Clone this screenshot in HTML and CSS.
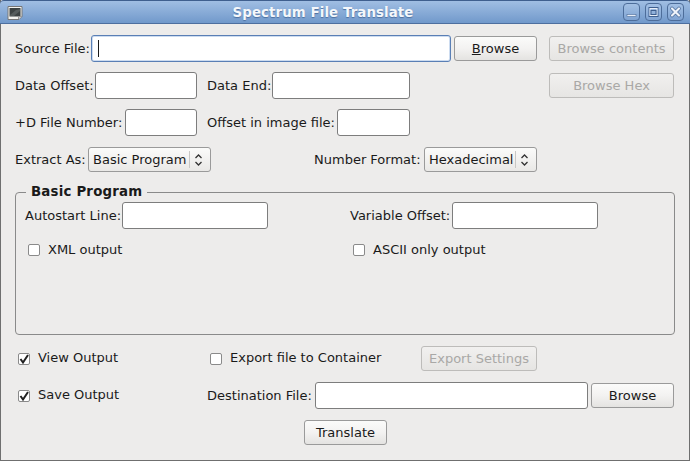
FILE: index.html
```html
<!DOCTYPE html>
<html>
<head>
<meta charset="utf-8">
<title>Spectrum File Translate</title>
<link rel="stylesheet" href="styles.css">
</head>
<body>
<div class="window">
  <div class="titlebar">
    <svg class="app-icon" width="16" height="16" viewBox="0 0 16 16"><path d="M1 1.5h14v10l-3 3H1z" fill="#f2f2ee" stroke="#777"/><rect x="2.5" y="3" width="11" height="8.5" fill="#3c4242"/><path d="M3 10 L9 5 L13 4 V6 L7 11 H3z" fill="#555c5c"/><path d="M11.5 14 V11.5 H15" fill="#ccc" stroke="#999"/></svg>
    <div class="title">Spectrum File Translate</div>
    <div class="wm">
      <span class="wm-btn"><svg width="15" height="16" viewBox="0 0 15 16"><rect x="3" y="10.5" width="9" height="2" fill="#e8eef7" stroke="#4d6d9a" stroke-width=".6"/></svg></span>
      <span class="wm-btn"><svg width="15" height="16" viewBox="0 0 15 16"><rect x="3" y="3.5" width="9" height="9" fill="none" stroke="#3f5f8e" stroke-width="1"/><rect x="4" y="4.5" width="7" height="7" fill="none" stroke="#e8eef7" stroke-width="1"/><rect x="5" y="6.5" width="5" height="4" fill="none" stroke="#3f5f8e" stroke-width="1"/></svg></span>
      <span class="wm-btn"><svg width="15" height="16" viewBox="0 0 15 16"><path d="M4 4.5 L11 11.5 M11 4.5 L4 11.5" stroke="#4d6d9a" stroke-width="3.6" stroke-linecap="round"/><path d="M4 4.5 L11 11.5 M11 4.5 L4 11.5" stroke="#eef3fa" stroke-width="2.2" stroke-linecap="round"/></svg></span>
    </div>
  </div>
  <div class="content">
    <div class="row row-1">
      <div class="field"><label class="l74">Source File:</label><input class="w360 focus" type="text"></div>
      <button class="btn b83 first"><u>B</u>rowse</button>
      <button class="btn b125 ml12" disabled>Browse contents</button>
    </div>
    <div class="row row-2">
      <div class="field cell192"><label class="l78">Data Offset:</label><input class="w102" type="text"></div>
      <div class="field cell342"><label class="l63">Data End:</label><input class="w138" type="text"></div>
      <button class="btn b125" disabled>Browse Hex</button>
    </div>
    <div class="row row-3">
      <div class="field cell192"><label class="l108">+D File Number:</label><input class="w72" type="text"></div>
      <div class="field"><label class="l128">Offset in image file:</label><input class="w73" type="text"></div>
    </div>
    <div class="row row-4">
      <div class="field cell299"><label class="l70">Extract As:</label><div class="combo w123"><span class="combo-text">Basic Program</span><span class="spin"><svg width="9" height="14" viewBox="0 0 9 14"><path d="M1.5 5 L4.5 2 L7.5 5 M1.5 9 L4.5 12 L7.5 9" fill="none" stroke="#333" stroke-width="1.3"/></svg></span></div></div>
      <div class="field"><label class="l107">Number Format:</label><div class="combo w113"><span class="combo-text">Hexadecimal</span><span class="spin"><svg width="9" height="14" viewBox="0 0 9 14"><path d="M1.5 5 L4.5 2 L7.5 5 M1.5 9 L4.5 12 L7.5 9" fill="none" stroke="#333" stroke-width="1.3"/></svg></span></div></div>
    </div>
    <fieldset class="group">
      <legend>Basic Program</legend>
      <div class="row group-fields">
        <div class="field cell325"><label class="l95">Autostart Line:</label><input class="w146" type="text"></div>
        <div class="field"><label class="l100">Variable Offset:</label><input class="w146" type="text"></div>
      </div>
      <div class="row group-checks">
        <div class="check cell325 inset"><span class="box"></span><span>XML output</span></div>
        <div class="check inset"><span class="box"></span><span>ASCII only output</span></div>
      </div>
    </fieldset>
    <div class="row row-view">
      <div class="check cell192 inset"><span class="box"><svg width="12" height="12" viewBox="0 0 12 12"><path d="M2.5 6 L5 9.5 L10 2" fill="none" stroke="#222" stroke-width="2"/></svg></span><span>View Output</span></div>
      <div class="check cell214 inset"><span class="box"></span><span>Export file to Container</span></div>
      <button class="btn b116" disabled>Export Settings</button>
    </div>
    <div class="row row-save">
      <div class="check cell192 inset"><span class="box"><svg width="12" height="12" viewBox="0 0 12 12"><path d="M2.5 6 L5 9.5 L10 2" fill="none" stroke="#222" stroke-width="2"/></svg></span><span>Save Output</span></div>
      <div class="field"><label class="l106">Destination File:</label><input class="w273" type="text"></div>
      <button class="btn b83 first">Browse</button>
    </div>
    <div class="row row-go">
      <button class="btn b83">Translate</button>
    </div>
  </div>
</div>
</body>
</html>
```
FILE: styles.css
```css
* { box-sizing: border-box; }
html, body { margin: 0; padding: 0; }
body { width: 690px; height: 461px; overflow: hidden; font-family: "DejaVu Sans", sans-serif; font-size: 13px; color: #1a1a1a; background: #edeceb; }
.window { width: 690px; height: 461px; background: #edeceb; border-left: 1px solid #6f6f6f; border-right: 1px solid #6f6f6f; border-bottom: 1px solid #6f6f6f; display: flex; flex-direction: column; }
.titlebar { height: 24px; flex: none; margin: 0 -1px; padding-right: 44px; position: relative; display: flex; align-items: center; justify-content: center; border-top: 1px solid #3f5f8e; border-bottom: 1px solid #4d6f9f; border-radius: 4px 4px 0 0; background: linear-gradient(#a0bee3, #7199cb); }
.app-icon { position: absolute; left: 7px; top: 4px; }
.title { font-weight: bold; font-size: 13.33px; color: #f4f7fb; letter-spacing: .1px; text-shadow: 0 1px 1px #4d6f9f; }
.wm { position: absolute; right: 6px; top: 2px; display: flex; gap: 5px; }
.wm-btn { width: 17px; height: 18px; border: 1px solid #4d6d9a; border-radius: 4px; background: linear-gradient(#a3c0e4, #7fa3d2); display: flex; align-items: center; justify-content: center; }
.wm-btn svg { flex: none; }
.content { flex: 1; padding: 0 0 0 14px; display: flex; flex-direction: column; }
.row { display: flex; align-items: center; }
.row-1 { height: 27px; margin-top: 11px; }
.row-2 { height: 27px; margin-top: 10px; }
.row-3 { height: 27px; margin-top: 10px; }
.row-4 { height: 25px; margin-top: 11px; }
.field { display: flex; align-items: center; gap: 2px; }
label { white-space: nowrap; flex: none; }
.l74 { width: 74px; } .l78 { width: 78px; } .l63 { width: 63px; } .l108 { width: 108px; } .l128 { width: 128px; } .l70 { width: 70px; } .l107 { width: 107px; } .l95 { width: 95px; } .l100 { width: 100px; } .l106 { width: 106px; }
input { height: 27px; margin: 0; padding: 0 4px; background: #fff; border: 1px solid #7d7d7d; border-radius: 3px; outline: none; display: block; font: inherit; }
input.focus { border-color: #5a7fb5; box-shadow: inset 0 0 0 1px #cddcf0; background-image: linear-gradient(#1a1a1a, #1a1a1a); background-repeat: no-repeat; background-size: 1px 17px; background-position: 6px 4px; }
.w360 { width: 360px; } .w102 { width: 102px; } .w138 { width: 138px; } .w72 { width: 72px; } .w73 { width: 73px; } .w146 { width: 146px; } .w273 { width: 273px; }
.cell192 { width: 192px; flex: none; }
.cell342 { width: 342px; flex: none; }
.cell299 { width: 299px; flex: none; }
.cell325 { width: 325px; flex: none; }
.cell214 { width: 214px; flex: none; }
.btn { height: 25px; padding: 0; font: inherit; color: #1a1a1a; border: 1px solid #9a9a9a; border-radius: 3px; background: linear-gradient(#fbfbfa 0%, #f3f2f1 50%, #e4e3e1 100%); }
.btn:disabled { color: #a9a8a6; border-color: #bdbcba; background: linear-gradient(#f1f0ef, #e6e5e3); }
.b83 { width: 83px; } .b125 { width: 125px; } .b116 { width: 116px; }
.first { margin-left: 3px; }
.ml12 { margin-left: 12px; }
.combo { height: 25px; display: flex; align-items: center; justify-content: space-between; padding: 0 7px 0 4px; border: 1px solid #9a9a9a; border-radius: 3px; background: linear-gradient(#fbfbfa, #e9e8e6); }
.w123 { width: 123px; margin-left: 1px; } .w113 { width: 113px; margin-left: 1px; }
.combo-text { white-space: nowrap; }
.spin { height: 17px; padding-left: 4px; border-left: 1px solid #c8c7c5; display: flex; align-items: center; }
.group { margin: 20px 0 0; padding: 0 0 0 9px; width: 660px; height: 143px; border: 1px solid #8a8a8a; border-radius: 4px; position: relative; display: block; min-width: 0; }
legend { position: absolute; left: 10px; top: -9px; padding: 0 5px; font-weight: bold; font-size: 13.33px; background: #edeceb; line-height: 16px; letter-spacing: .2px; }
.group-fields { height: 27px; margin-top: 9px; }
.group-checks { height: 18px; margin-top: 12px; }
.check { display: flex; align-items: center; gap: 8px; white-space: nowrap; }
.check > span:last-child { position: relative; top: -1px; }
.inset { padding-left: 3px; }
.box { width: 12px; height: 12px; flex: none; background: #fff; border: 1px solid #8a8a8a; border-radius: 2px; display: flex; align-items: center; justify-content: center; }
.box svg { flex: none; }
.row-view { height: 25px; margin-top: 11px; }
.row-save { height: 27px; margin-top: 11px; }
.row-go { height: 25px; margin-top: 11px; padding-left: 289px; }
```
